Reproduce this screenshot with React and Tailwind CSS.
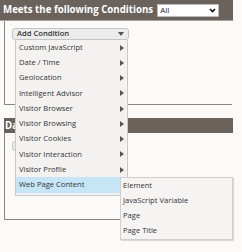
import React from "react";

const items = [
  "Custom JavaScript",
  "Date / Time",
  "Geolocation",
  "Intelligent Advisor",
  "Visitor Browser",
  "Visitor Browsing",
  "Visitor Cookies",
  "Visitor Interaction",
  "Visitor Profile",
  "Web Page Content",
];

const subItems = ["Element", "JavaScript Variable", "Page", "Page Title"];

const Arrow = () => (
  <svg width="4" height="6" viewBox="0 0 4 6" className="shrink-0">
    <path d="M0 0 L4 3 L0 6 Z" fill="#555" />
  </svg>
);

const App = () => {
  return (
    <div
      className="relative w-[242px] h-[252px] bg-[#fbfaf9] overflow-hidden text-[#333]"
      style={{ fontFamily: '"Open Sans", "Liberation Sans", sans-serif' }}
    >
      {/* header */}
      <div className="w-[233px] h-[21px] bg-[#6b625c] border-b border-[#a9a39e] flex items-center pl-[3px] gap-[4px]">
        <span className="text-white font-bold text-[9.7px] leading-none tracking-[0px]">
          Meets the following Conditions
        </span>
        <div className="w-[62px] h-[13px] bg-white border border-[#bbb] flex items-center justify-between px-[2px]">
          <span className="text-[8px] leading-none text-[#223]">All</span>
          <svg width="7" height="5" viewBox="0 0 7 5">
            <path d="M1 1 L3.5 3.5 L6 1" stroke="#111" strokeWidth="1.6" fill="none" />
          </svg>
        </div>
      </div>

      {/* panel 1 */}
      <div className="ml-[4px] w-[228px] h-[84px] border-l border-b border-[#8a8581] pt-[7px] pl-[7px]">
        <div className="w-[117px] h-[12px] rounded-[3px] border border-[#c4c4c4] bg-[#ececec] flex items-center justify-between pl-[4px] pr-[4px]">
          <span className="text-[7.6px] font-semibold leading-none text-[#333]">Add Condition</span>
          <svg width="6" height="4" viewBox="0 0 6 4">
            <path d="M0 0 L6 0 L3 4 Z" fill="#555" />
          </svg>
        </div>
      </div>

      {/* panel 2 */}
      <div className="mt-[13px] ml-[4px] w-[229px] h-[15px] bg-[#6b625c] flex items-center pl-[1px]">
        <span className="text-white font-bold text-[9.7px] leading-none">Data</span>
      </div>
      <div className="ml-[4px] w-[228px] h-[87px] border-l border-b border-[#8a8581] pt-[8px] pl-[7px]">
        <div className="w-[80px] h-[10px] rounded-[3px] border border-[#c4c4c4] bg-[#ececec]" />
      </div>

      {/* dropdown menu */}
      <div className="absolute left-[15px] top-[40px] w-[113px] pb-[2px] bg-[#f3f2f1] border border-[#c9c9c9] border-t-0">
        {items.map((it, i) => (
          <div
            key={it}
            className={`h-[15.25px] flex items-center justify-between pl-[3px] pr-[3px] ${
              i === items.length - 1 ? "bg-[#c6e5f6]" : ""
            }`}
          >
            <span className="text-[7.6px] leading-none whitespace-nowrap">{it}</span>
            <Arrow />
          </div>
        ))}
      </div>

      {/* submenu */}
      <div className="absolute left-[120px] top-[177px] w-[113px] pb-[1px] bg-[#f5f4f3] border border-[#cfcfcf] shadow-[1px_1px_1px_rgba(0,0,0,0.12)]">
        {subItems.map((it) => (
          <div key={it} className="h-[15px] flex items-center pl-[2px]">
            <span className="text-[7.6px] leading-none whitespace-nowrap">{it}</span>
          </div>
        ))}
      </div>
    </div>
  );
};

export default App;
